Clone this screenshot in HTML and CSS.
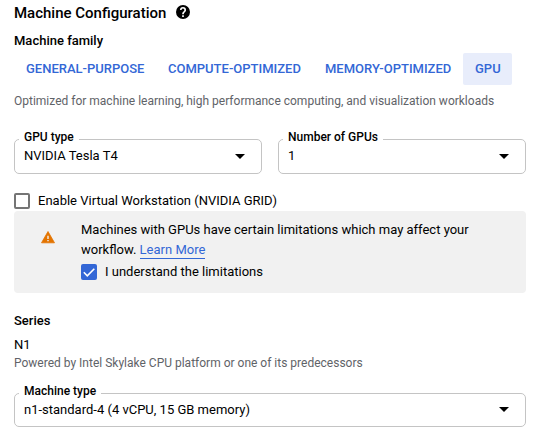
FILE: index.html
```html
<!DOCTYPE html>
<html lang="en">
<head>
<meta charset="utf-8">
<title>Machine Configuration</title>
<link rel="stylesheet" href="styles.css">
</head>
<body>
<main class="panel">
  <header class="heading">
    <h1 class="title">Machine Configuration</h1>
    <svg class="help" viewBox="2 2 20 20"><path d="M12 2a10 10 0 1 0 0 20 10 10 0 0 0 0-20zm1.2 17h-2.400v-2.300h2.400zm2.400-7.600-1 1c-.9.9-1.400 1.500-1.400 2.900h-2.400v-.6c0-1.100.4-2.100 1.200-2.800l1.300-1.300a2 2 0 1 0-3.300-1.500H7.700a4.300 4.300 0 0 1 8.600 0c0 .9-.3 1.700-.7 2.300z"/></svg>
  </header>
  <h2 class="subtitle family">Machine family</h2>
  <nav class="tabs">
    <a class="tab general">GENERAL-PURPOSE</a>
    <a class="tab compute">COMPUTE-OPTIMIZED</a>
    <a class="tab memory">MEMORY-OPTIMIZED</a>
    <a class="tab gpu active">GPU</a>
  </nav>
  <p class="hint summary"><span>Optimized for machine learning, high performance computing, and visualization workloads</span></p>
  <div class="fields">
    <fieldset class="field">
      <legend class="label">GPU type</legend>
      <div class="select"><span>NVIDIA Tesla T4</span><svg class="arrow" viewBox="0 0 10 5"><path d="M0 0h10L5 5z"/></svg></div>
    </fieldset>
    <fieldset class="field">
      <legend class="label">Number of GPUs</legend>
      <div class="select"><span>1</span><svg class="arrow" viewBox="0 0 10 5"><path d="M0 0h10L5 5z"/></svg></div>
    </fieldset>
  </div>
  <div class="check-row grid-option"><span class="box"></span><span>Enable Virtual Workstation (NVIDIA GRID)</span></div>
  <section class="notice">
    <svg class="warning" viewBox="0 0 14 12"><path fill="#e37400" stroke="#e37400" stroke-width=".8" stroke-linejoin="round" d="M7 .5l6.500 11.300H.5z"/><path fill="#f1f1f1" d="M6.300 4.700h1.400v3.300H6.300zM6.300 9h1.400v1.200H6.300z"/></svg>
    <div class="notice-body">
      <p class="message"><span>Machines with GPUs have certain limitations which may affect your</span><br>workflow. <a class="link">Learn More</a></p>
      <div class="check-row"><span class="box checked"><svg viewBox="0 0 16 16"><path d="M2.800 8.300l3.500 3.500 7-7"/></svg></span><span>I understand the limitations</span></div>
    </div>
  </section>
  <h2 class="subtitle series">Series</h2>
  <p class="value">N1</p>
  <p class="hint powered"><span>Powered by Intel Skylake CPU platform or one of its predecessors</span></p>
  <fieldset class="field machine">
    <legend class="label">Machine type</legend>
    <div class="select"><span>n1-standard-4 (4 vCPU, 15 GB memory)</span><svg class="arrow" viewBox="0 0 10 5"><path d="M0 0h10L5 5z"/></svg></div>
  </fieldset>
</main>
</body>
</html>
```
FILE: styles.css
```css
* { box-sizing: border-box; }
body {
  margin: 0;
  background: #fff;
  color: #000;
  font: 400 13px/20px Roboto, sans-serif;
}
h1, h2, p { margin: 0; }
.panel { width: 526px; padding: 3px 0 0 14px; }
.heading { display: flex; align-items: center; height: 20px; }
.title { width: 162px; font-size: 15px; font-weight: 500; line-height: 20px; white-space: nowrap; }
.help { width: 14px; height: 14px; margin-bottom: 2px; }
.subtitle { font-size: 13px; font-weight: 500; line-height: 20px; }
.family { margin-top: 8px; }
.tabs { display: flex; height: 32px; margin-top: 2px; }
.tab {
  padding: 0 12px;
  color: #3367d6;
  font-weight: 500;
  line-height: 32px;
  white-space: nowrap;
}
.general { width: 142px; }
.compute { width: 157px; }
.memory { width: 150px; }
.gpu { width: 49px; }
.active { background: #e8edfb; border-radius: 2px; }
.hint { color: #5f6368; font-size: 12px; line-height: 16px; white-space: nowrap; }
.summary { margin-top: 8px; }
.fields { display: grid; grid-template-columns: 248px 248px; gap: 16px; margin-top: 22px; }
.field {
  min-width: 0;
  height: 43px;
  margin: 0;
  padding: 0 16px 0 4px;
  border: 1px solid #c4c4c4;
  border-radius: 5px;
}
.label { height: 16px; padding: 0 5px; font-size: 12px; font-weight: 500; line-height: 12px; }
.select { display: flex; align-items: center; justify-content: space-between; height: 18px; padding-left: 5px; white-space: nowrap; }
.arrow { width: 10px; height: 5px; }
.check-row { display: flex; align-items: center; gap: 8px; height: 16px; white-space: nowrap; }
.grid-option { margin-top: 19px; }
.box { width: 16px; height: 16px; border: 2px solid #757575; border-radius: 2px; }
.checked { border: 0; background: #3367d6; }
.checked svg { display: block; fill: none; stroke: #fff; stroke-width: 1.6; }
.notice { display: flex; height: 82px; margin-top: 2px; background: #f1f1f1; border-radius: 4px; }
.warning { width: 14px; height: 12px; margin: 20px 26px 0 27px; overflow: visible; }
.notice-body { padding-top: 9px; }
.message { height: 44px; white-space: nowrap; }
.link { display: inline-block; height: 19px; border-bottom: 1px solid #3367d6; color: #3367d6; }
.series { margin-top: 18px; }
.value { margin-top: 4px; }
.machine { height: 42px; margin-top: 14px; }
.machine .select { height: 16px; }
.machine .select span { padding-top: 2px; }
```
